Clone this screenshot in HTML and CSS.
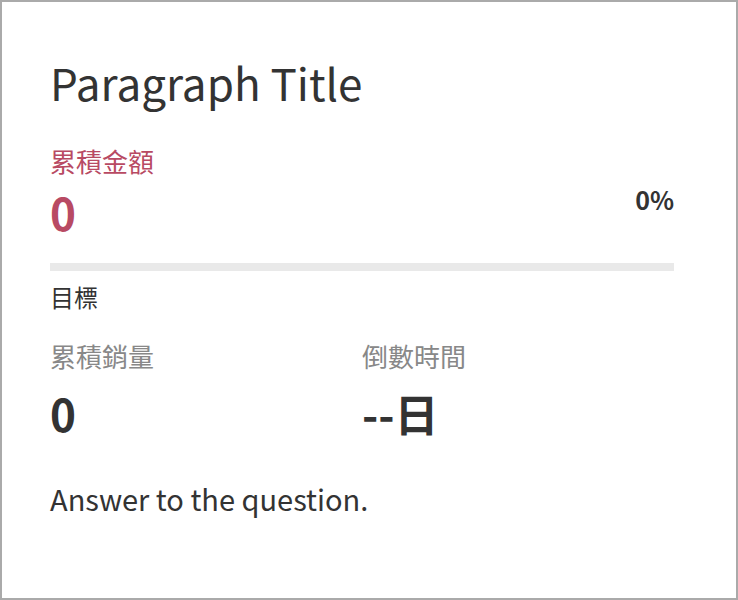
FILE: index.html
```html
<!DOCTYPE html>
<html lang="zh-Hant">
<head>
    <meta charset="UTF-8">
    <meta name="viewport" content="width=device-width, initial-scale=1.0">
    <title>Paragraph Title</title>
    <link rel="stylesheet" href="styles.css">
</head>
<body>
    <div class="card">
        <h2 class="card-title">Paragraph Title</h2>

        <div class="amount-label">累積金額</div>
        <div class="progress-head">
            <div class="amount-value">0</div>
            <div class="percent">0%</div>
        </div>
        <div class="progress-bar">
            <div class="progress-fill" style="width: 0%"></div>
        </div>
        <div class="goal">目標</div>

        <div class="stats">
            <div class="stat">
                <div class="stat-label">累積銷量</div>
                <div class="stat-value">0</div>
            </div>
            <div class="stat">
                <div class="stat-label">倒數時間</div>
                <div class="stat-value">--日</div>
            </div>
        </div>

        <p class="answer">Answer to the question.</p>
    </div>
</body>
</html>
```

FILE: styles.css
```css
body {
    margin: 0;
    font-family: "Noto Sans CJK TC", "Noto Sans", sans-serif;
    color: #333;
    background-color: #fff;
}
.card {
    box-sizing: border-box;
    width: 738px;
    height: 600px;
    border: 2px solid #aaa;
    padding: 52px 62px 0 48px;
}
.card-title {
    margin: 0;
    font-size: 44px;
    font-weight: 400;
    line-height: 56px;
}
.amount-label {
    color: #b84a63;
    font-size: 26px;
    line-height: 36px;
    margin-top: 33px;
}
.progress-head {
    display: flex;
    justify-content: space-between;
    align-items: flex-start;
    margin-top: 5px;
}
.amount-value {
    color: #b84a63;
    font-size: 44px;
    font-weight: 700;
    line-height: 56px;
}
.percent {
    font-size: 25px;
    font-weight: 700;
    line-height: 30px;
}
.progress-bar {
    height: 8px;
    background-color: #e9e9e9;
    margin-top: 23px;
}
.progress-fill {
    height: 100%;
    background-color: #b84a63;
}
.goal {
    font-size: 24px;
    line-height: 32px;
    margin-top: 10px;
}
.stats {
    display: grid;
    grid-template-columns: 1fr 1fr;
    margin-top: 25px;
}
.stat-label {
    color: #888;
    font-size: 26px;
    line-height: 36px;
}
.stat-value {
    font-size: 44px;
    font-weight: 700;
    line-height: 56px;
    margin-top: 11px;
}
.answer {
    margin: 37px 0 0;
    font-size: 29px;
    line-height: 40px;
}
```
